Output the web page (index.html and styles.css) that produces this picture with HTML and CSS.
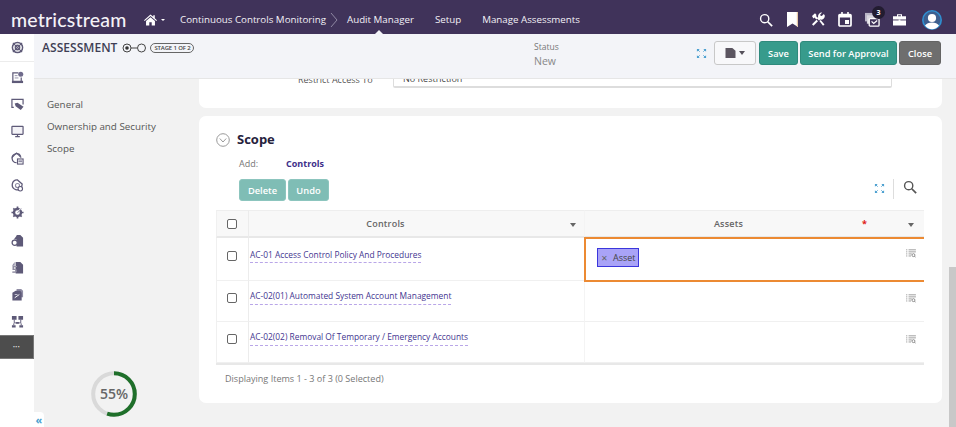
FILE: index.html
```html
<!DOCTYPE html>
<html lang="en">
<head>
<meta charset="utf-8">
<title>Assessment</title>
<link rel="stylesheet" href="styles.css">
</head>
<body>
<svg class="defs" width="0" height="0" aria-hidden="true">
  <symbol id="i-expand" viewBox="0 0 12 12"><path d="M1 1h3L1 4zM11 1H8l3 3zM1 11h3l-3-3zM11 11H8l3-3z" fill="#4a9fd0"/><path d="M2 2l2 2M10 2L8 4M2 10l2-2M10 10L8 8" stroke="#4a9fd0" stroke-width="1"/></symbol>
  <symbol id="i-search" viewBox="0 0 16 16"><circle cx="6.500" cy="6.500" r="4.700" fill="none" stroke="currentColor" stroke-width="1.600"/><path d="M10 10l5 5" stroke="currentColor" stroke-width="2"/></symbol>
  <symbol id="i-list" viewBox="0 0 12 11"><path d="M0 1h1.500M3 1h9M0 3.500h1.500M3 3.500h9M0 6h1.500M3 6h4M0 8.500h1.500M3 8.500h3" stroke="#8a8a8a" stroke-width="1" fill="none"/><circle cx="9" cy="7.500" r="1.800" fill="none" stroke="#777" stroke-width="1"/><path d="M10.300 8.800l1.500 1.500" stroke="#777" stroke-width="1"/></symbol>
  <symbol id="i-doc" viewBox="0 0 14 14"><path d="M2 12V2h6M11 7v5" fill="none" stroke="#5e5a78" stroke-width="1.300"/><path d="M1 10.500h12V13H1z" fill="#5e5a78"/><path d="M4 5h3M4 7.500h4" stroke="#8f8ca4"/><circle cx="10.500" cy="3.500" r="2.700" fill="#6f6b8c"/></symbol>
  <symbol id="i-screen" viewBox="0 0 14 14"><rect x="1" y="1.500" width="12" height="8.500" rx=".5" fill="#f4f3f7" stroke="#5e5a78" stroke-width="1.300"/><path d="M4.500 12.500h5M7 10v2" stroke="#5e5a78" stroke-width="1.300"/></symbol>
  <symbol id="i-screen2" viewBox="0 0 14 14"><path d="M3 10H1V1.500h12V7" fill="none" stroke="#5e5a78" stroke-width="1.300"/><path d="M4 6l3-1 6.500 4.500L10.500 13 5 9z" fill="#5e5a78"/></symbol>
  <symbol id="i-home" viewBox="0 0 14 14"><path d="M6 11.500A4.800 4.800 0 1 1 10.500 5" fill="none" stroke="#5e5a78" stroke-width="1.400"/><path d="M1 6l5-5 5 5" fill="none" stroke="#5e5a78" stroke-width="1.200"/><rect x="7" y="7.500" width="6" height="5.500" fill="#fff" stroke="#5e5a78" stroke-width="1.200"/><path d="M8 9h4v2H8z" fill="#8f8ca4"/></symbol>
  <symbol id="i-target" viewBox="0 0 14 14"><path d="M7 1l5 4.500-.5 3A5.300 5.300 0 1 1 7 1z" fill="none" stroke="#5e5a78" stroke-width="1.400"/><circle cx="7" cy="7" r="2.200" fill="none" stroke="#8f8ca4" stroke-width="1.200"/><circle cx="10" cy="10.500" r="2.400" fill="#fff" stroke="#5e5a78" stroke-width="1.200"/></symbol>
  <symbol id="i-gear" viewBox="0 0 14 14"><circle cx="7" cy="7" r="3.800" fill="none" stroke="#5e5a78" stroke-width="2.600"/><path d="M7 .5v2M7 11.500v2M.5 7h2M11.500 7h2M2.500 2.500l1.400 1.400M10 10l1.500 1.500M2.500 11.500L4 10" stroke="#5e5a78" stroke-width="1.800"/><path d="M6 8l5-6" stroke="#fff" stroke-width="1.400"/><path d="M7 7.500l4-5" stroke="#8f8ca4" stroke-width="1"/></symbol>
  <symbol id="i-file" viewBox="0 0 14 14"><path d="M6 1h4l3 3v9.500H6zM3 6l3-4v4z" fill="#5e5a78"/><circle cx="4" cy="9.500" r="2.800" fill="#fff" stroke="#5e5a78" stroke-width="1.400"/></symbol>
  <symbol id="i-file2" viewBox="0 0 14 14"><path d="M5 1h5l3 3v9.500H5z" fill="#5e5a78"/><path d="M1 5l3-4v4z" fill="#8f8ca4"/><path d="M6.500 6H2.500v3h3v3H1.500" fill="none" stroke="#5e5a78" stroke-width="1.500"/><path d="M6.500 6H2.500v3h3v3H1.500" fill="none" stroke="#fff" stroke-width=".4"/></symbol>
  <symbol id="i-stack" viewBox="0 0 14 14"><path d="M6 1h5l2 2v7H6z" fill="#8f8ca4"/><path d="M1.500 5L5 3h5l1.500 2v8.500h-10z" fill="#5e5a78"/><path d="M4 10.500l5-3.500" stroke="#fff" stroke-width="1"/><path d="M4 7h3" stroke="#c8c6d4"/></symbol>
  <symbol id="i-org" viewBox="0 0 14 14"><path d="M1 1h5v4H1zM8 1h5v4H8zM5.500 7.500h3v2h-3zM1 11h4v2.500H1zM9 11h4v2.500H9z" fill="#5e5a78"/><path d="M3.500 5v3.500H7M10.500 5v3.500H7M3 11V9M11 11V9" stroke="#5e5a78" fill="none"/></symbol>
</svg>

<header class="topbar">
  <span class="logo">metricstream</span>
  <span class="home">
    <svg class="home-icon" viewBox="0 0 14 12"><path d="M7 0l3 2.600V1h1.600v3L14 6.200l-.8.800L7 1.800.8 7 0 6.200z" fill="#fff"/><path d="M2.200 7L7 3l4.800 4v5H8.300V8.500H5.700V12H2.200z" fill="#fff"/></svg>
    <i class="caret caret-white"></i>
  </span>
  <nav class="mainnav">
    <span class="crumb">Continuous Controls Monitoring</span>
    <svg class="chev" viewBox="0 0 8 16"><path d="M1 1l6 7-6 7" fill="none" stroke="#8f88a3" stroke-width="1"/></svg>
    <span class="crumb crumb-active">Audit Manager</span>
    <span class="crumb crumb-setup">Setup</span>
    <span class="crumb crumb-manage">Manage Assessments</span>
  </nav>
  <div class="tools">
    <svg class="tool tool-search"><use href="#i-search"/></svg>
    <svg class="tool tool-mark" viewBox="0 0 11 15"><path d="M0 0h11v15L5.500 11.500 0 15z" fill="#fff"/><path d="M9.800 0H11v15l-1.200-.8z" fill="#e8c9a8"/></svg>
    <svg class="tool" viewBox="0 0 14 14"><path d="M1 3.500L4 .8l1.600 1.600L5 3.400l2 2-1.600 1.700-2-2-1 .8z" fill="#fff"/><path d="M5.500 7.300L1 11.800 2.400 13.300 7 8.700z" fill="#fff"/><path d="M12.800 1.500l-2 2-1.300-.3-.3-1.300 2-1.800a3.700 3.700 0 0 0-4 4.700L6 6 8 8l1.200-1a3.700 3.700 0 0 0 4.600-4z" fill="#fff"/><path d="M8.400 8.600l3.600 4.600 1.500-1.300L9.700 7.400z" fill="#fff"/></svg>
    <svg class="tool" viewBox="0 0 14 15"><rect x="1" y="2.500" width="12" height="11.500" rx="1" fill="none" stroke="#fff" stroke-width="1.700"/><path d="M1 3h12v2.500H1zM3.200 0h1.600v3H3.200zM9.200 0h1.600v3H9.200z" fill="#fff"/><rect x="7" y="8" width="4" height="4" fill="#fff"/></svg>
    <span class="tool-badged">
      <svg class="tool tool-tasks" viewBox="0 0 16 16"><path d="M0 1h9v9H0z" fill="#b9b5c6"/><path d="M2 3.500h10v9H2z" fill="#d9d7df"/><rect x="4.500" y="7" width="10.500" height="8" rx="1" fill="#40335a" stroke="#fff" stroke-width="1.400"/><path d="M7 10l2.300 2.300L13 9" stroke="#fff" stroke-width="1.300" fill="none"/></svg>
      <b class="badge">3</b>
    </span>
    <svg class="tool tool-case" viewBox="0 0 14 13"><path d="M0 3h14v10H0zM4.300 3V.8h5.400V3H8.500V2H5.500v1z" fill="#fff"/><path d="M0 7h14" stroke="#40335a" stroke-width="1"/><path d="M6 6.500h2v1.500H6z" fill="#fff"/></svg>
    <svg class="avatar" viewBox="0 0 20 20"><circle cx="10" cy="10" r="10" fill="#2f8fd0"/><circle cx="10" cy="10" r="8.400" fill="#3d5f8f"/><circle cx="10" cy="8" r="4.100" fill="#fff"/><path d="M3 15.500a8 6 0 0 1 14 0A8.400 8.400 0 0 1 3 15.500z" fill="#fff"/></svg>
  </div>
</header>

<div class="body">
  <aside class="rail">
    <div class="rail-top"><svg class="rail-icon" viewBox="0 0 14 14"><circle cx="7" cy="7" r="5.500" fill="none" stroke="#5e5a78" stroke-width="1.600"/><circle cx="7" cy="7" r="2.400" fill="none" stroke="#5e5a78" stroke-width="1.400"/><path d="M2 2l10 10M12 2L2 12" stroke="#5e5a78" stroke-width="1.200"/></svg></div>
    <div class="rail-list">
      <svg class="rail-icon"><use href="#i-doc"/></svg>
      <svg class="rail-icon"><use href="#i-screen2"/></svg>
      <svg class="rail-icon"><use href="#i-screen"/></svg>
      <svg class="rail-icon"><use href="#i-home"/></svg>
      <svg class="rail-icon"><use href="#i-target"/></svg>
      <svg class="rail-icon"><use href="#i-gear"/></svg>
      <svg class="rail-icon"><use href="#i-file"/></svg>
      <svg class="rail-icon"><use href="#i-file2"/></svg>
      <svg class="rail-icon"><use href="#i-stack"/></svg>
      <svg class="rail-icon"><use href="#i-org"/></svg>
    </div>
    <div class="rail-more">•••</div>
  </aside>

  <div class="content">
    <div class="subheader">
      <div class="title-block">
        <span class="title">ASSESSMENT</span>
        <svg class="stages" viewBox="0 0 25 10"><circle cx="5" cy="5" r="4" fill="none" stroke="#444" stroke-width="1"/><circle cx="5" cy="5" r="1.800" fill="#333"/><path d="M9 5h6" stroke="#444"/><circle cx="19.500" cy="5" r="4" fill="none" stroke="#444" stroke-width="1"/></svg>
        <span class="stage-pill">STAGE 1 OF 2</span>
      </div>
      <div class="status"><span class="status-label">Status</span><span class="status-value">New</span></div>
      <div class="actions">
        <svg class="expand"><use href="#i-expand"/></svg>
        <button class="btn-file"><svg class="file-glyph" viewBox="0 0 11 11"><path d="M0 0h7.500L11 3v8H0z" fill="#5b5560"/></svg><i class="caret caret-dark"></i></button>
        <button class="btn btn-teal">Save</button>
        <button class="btn btn-teal btn-send">Send for Approval</button>
        <button class="btn btn-gray">Close</button>
      </div>
    </div>

    <div class="workspace">
      <div class="sidenav">
        <a class="navlink">General</a>
        <a class="navlink">Ownership and Security</a>
        <a class="navlink">Scope</a>
        <svg class="ring" viewBox="0 0 46 46">
          <circle cx="23" cy="23" r="20.800" fill="none" stroke="#d9d9d9" stroke-width="4"/>
          <circle cx="23" cy="23" r="20.800" fill="none" stroke="#1f6f2a" stroke-width="4" stroke-dasharray="71.900 58.800" transform="rotate(-90 23 23)"/>
          <text x="23" y="28" text-anchor="middle" class="ring-text">55%</text>
        </svg>
        <span class="collapse">«</span>
      </div>

      <main class="main">
        <section class="card card-clip">
          <div class="clip-row">
            <span class="clip-label">Restrict Access To</span>
            <span class="clip-input">No Restriction</span>
          </div>
        </section>

        <section class="card card-scope">
          <h2 class="scope-head">
            <svg class="scope-toggle" viewBox="0 0 14 14"><circle cx="7" cy="7" r="6.300" fill="none" stroke="#9a9a9a"/><path d="M3.800 5.500L7 9l3.200-3.500" fill="none" stroke="#9a9a9a"/></svg>
            Scope
          </h2>
          <div class="add-row"><span class="add-label">Add:</span><a class="add-link">Controls</a></div>
          <div class="toolbar">
            <button class="btn btn-soft">Delete</button>
            <button class="btn btn-soft">Undo</button>
            <span class="toolbar-right">
              <svg class="expand"><use href="#i-expand"/></svg>
              <span class="divider"></span>
              <svg class="tb-search"><use href="#i-search"/></svg>
            </span>
          </div>

          <div class="grid">
            <div class="gcell head c-check"><i class="check"></i></div>
            <div class="gcell head c-controls"><span class="head-text">Controls</span><i class="caret caret-gray"></i></div>
            <div class="gcell head c-assets"><span class="head-text">Assets</span><span class="req">*</span><i class="caret caret-gray"></i></div>

            <div class="gcell r1 c-check"><i class="check"></i></div>
            <div class="gcell r1 c-controls"><a class="rowlink">AC-01 Access Control Policy And Procedures</a></div>
            <div class="gcell r1 c-assets editing">
              <span class="chip"><span class="chip-x">✕</span>Asset</span>
              <svg class="list-icon"><use href="#i-list"/></svg>
            </div>

            <div class="gcell r2 c-check"><i class="check"></i></div>
            <div class="gcell r2 c-controls"><a class="rowlink">AC-02(01) Automated System Account Management</a></div>
            <div class="gcell r2 c-assets"><svg class="list-icon"><use href="#i-list"/></svg></div>

            <div class="gcell r3 c-check"><i class="check"></i></div>
            <div class="gcell r3 c-controls"><a class="rowlink">AC-02(02) Removal Of Temporary / Emergency Accounts</a></div>
            <div class="gcell r3 c-assets"><svg class="list-icon"><use href="#i-list"/></svg></div>
          </div>
          <p class="footer-note">Displaying Items 1 - 3 of 3 (0 Selected)</p>
        </section>
      </main>

      <div class="scrollbar"><span class="thumb"></span></div>
    </div>
  </div>
</div>
</body>
</html>
```
FILE: styles.css
```css
* { box-sizing: border-box; }
html, body { margin: 0; height: 100%; overflow: hidden; }
body { width: 956px; height: 427px; display: flex; flex-direction: column; font-family: "Open Sans", "Noto Sans", sans-serif; background: #f2f2f2; color: #333; }
.defs { position: absolute; }
button { font-family: inherit; }

.topbar { height: 34px; flex: none; display: flex; align-items: center; background: #40335a; color: #fff; padding: 5px 0 0 11px; position: relative; }
.logo { font-family: "Lato", sans-serif; font-size: 19.500px; font-weight: 500; letter-spacing: .2px; width: 133px; color: #f4f2f7; }
.home { display: flex; align-items: center; gap: 4px; width: 36px; }
.home-icon { width: 13px; height: 12px; }
.caret { display: inline-block; width: 0; height: 0; border-left: 3.500px solid transparent; border-right: 3.500px solid transparent; border-top: 4px solid #fff; }
.caret-white { border-left-width: 2.500px; border-right-width: 2.500px; border-top-width: 2.500px; }
.mainnav { display: flex; align-items: center; font-size: 9.750px; font-weight: 400; }
.crumb { color: #f2f0f6; white-space: nowrap; }
.chev { width: 8px; height: 16px; margin: 0 9px 0 4px; }
.crumb-active { position: relative; }
.crumb-active::after { content: ""; position: absolute; left: 28px; bottom: -8px; border-left: 4px solid transparent; border-right: 4px solid transparent; border-bottom: 4px solid #f3f4f8; }
.crumb-setup { margin-left: 21px; }
.crumb-manage { margin-left: 21px; }
.tools { margin-left: auto; display: flex; align-items: center; padding-right: 14px; gap: 13px; }
.tool { width: 14px; height: 15px; display: block; color: #fff; }
.tool-search { width: 14px; height: 14px; }
.tool-mark { width: 11px; margin-left: 1px; }
.tool-tasks { width: 15px; }
.tool-case { width: 13px; height: 13px; }
.tool-badged { position: relative; display: block; }
.badge { position: absolute; top: -6px; right: -5px; width: 13px; height: 13px; border-radius: 50%; background: #221c30; font-size: 7px; line-height: 13px; text-align: center; color: #fff; }
.avatar { width: 20px; height: 20px; margin-left: 3px; }

.body { flex: 1; min-height: 0; display: flex; }
.rail { width: 34px; flex: none; background: #fff; position: relative; display: flex; flex-direction: column; }
.rail-top { height: 28px; display: flex; align-items: center; justify-content: center; border-bottom: 1px solid #ececec; }
.rail-icon { width: 13px; height: 13px; display: block; }
.rail-list { display: flex; flex-direction: column; align-items: center; gap: 14.100px; padding-top: 9px; }
.rail-more { height: 24px; margin-top: 7px; background: #4d4d4d; border: 1px solid #777; border-left: 0; color: #eee; font-size: 5px; letter-spacing: .5px; display: flex; align-items: center; justify-content: center; }

.content { flex: 1; min-width: 0; display: flex; flex-direction: column; }
.subheader { height: 45px; flex: none; background: #f3f4f8; border-bottom: 1px solid #e6e6e6; display: flex; align-items: flex-start; position: relative; }
.title-block { display: flex; align-items: center; padding: 5px 0 0 8px; width: 500px; }
.title { font-size: 12px; font-weight: 600; color: #3e3e55; letter-spacing: .05px; }
.stages { width: 25px; height: 10px; margin: 1px 0 0 5px; }
.stage-pill { margin-left: 3px; border: 1px solid #666; border-radius: 7px; font-size: 6px; line-height: 8px; height: 10px; width: 44px; text-align: center; color: #444; font-weight: 600; white-space: nowrap; letter-spacing: -.15px; }
.status { display: flex; flex-direction: column; padding-top: 7px; }
.status-label { font-size: 8.500px; line-height: 12px; color: #777; }
.status-value { font-size: 10.500px; line-height: 16px; color: #888; }
.actions { position: absolute; right: 14px; top: 7px; display: flex; align-items: center; }
.expand { width: 11px; height: 11px; display: block; margin-right: 6px; }
.btn-file { width: 42px; height: 24px; border: 1px solid #c8c8c8; background: #f8f8fa; border-radius: 3px; margin-right: 3px; display: flex; align-items: center; justify-content: center; gap: 3px; padding: 0; margin-left: 1px; }
.file-glyph { width: 11px; height: 10px; }
.caret-dark { border-top-color: #55505a; }
.btn { border: 1px solid #8fa; border-radius: 3px; font-size: 9.300px; font-weight: 600; height: 24px; padding: 0; color: #fff; }
.btn-teal { background: #379b8c; border-color: #2f8a7c; width: 39px; margin-right: 2px; }
.btn-send { width: 97px; }
.btn-gray { background: #6e6e6e; border-color: #646464; width: 42px; margin-left: 0; margin-right: 1px; }

.workspace { flex: 1; min-height: 0; display: flex; }
.sidenav { width: 165px; flex: none; position: relative; display: flex; flex-direction: column; padding: 19px 0 0 13px; }
.navlink { font-size: 9.800px; line-height: 14px; margin-bottom: 8px; color: #555; }
.ring { position: absolute; left: 57px; top: 292px; width: 46px; height: 46px; }
.ring-text { font-size: 14px; font-weight: 600; fill: #666; font-family: "Open Sans", sans-serif; }
.collapse { position: absolute; left: 0; bottom: 0; width: 10px; height: 15px; background: #fff; border-top-right-radius: 4px; color: #4a9fd0; font-size: 11px; line-height: 15px; text-align: center; font-weight: 700; }

.main { flex: 1; min-width: 0; overflow: hidden; display: flex; flex-direction: column; gap: 8px; }
.card { background: #fff; border-radius: 7px; flex: none; }
.card-clip { height: 29px; border-radius: 0 0 7px 7px; position: relative; overflow: hidden; }
.clip-row { display: flex; align-items: flex-start; height: 9px; padding-left: 99px; }
.clip-label { font-size: 9px; line-height: 1px; height: 9px; color: #555; width: 95px; white-space: nowrap; }
.clip-input { width: 499px; height: 9px; border: 1px solid #ddd; border-top: 0; border-bottom-width: 2px; border-radius: 0 0 2px 2px; font-size: 9px; line-height: 0; padding-left: 9px; color: #444; background: #fff; }
.card-scope { height: 287px; padding: 0 18px 0 17px; }
.scope-head { margin: 0; height: 46px; padding-top: 15px; display: flex; align-items: flex-start; font-size: 13px; line-height: 17px; font-weight: 700; color: #26223c; gap: 7px; }
.scope-toggle { width: 14px; height: 14px; margin-top: 2px; }
.add-row { display: flex; font-size: 9px; line-height: 12px; height: 17px; padding-left: 23px; margin-top: -4px; }
.add-label { width: 47px; color: #777; }
.add-link { color: #40308a; font-weight: 700; }
.toolbar { display: flex; align-items: flex-start; gap: 2px; padding-left: 23px; height: 31px; margin-top: 4px; }
.btn-soft { width: 47px; height: 22px; background: #7fbdb5; border-color: #8cc5be; margin: 0; }
.btn-soft + .btn-soft { width: 41px; }
.toolbar-right { margin-left: auto; display: flex; align-items: flex-start; height: 20px; padding-right: 7px; }
.toolbar-right .expand { margin: 4px 8px 0 0; }
.divider { width: 1px; height: 20px; background: #ddd; margin-right: 9px; }
.tb-search { width: 14px; height: 14px; color: #555; display: block; margin-top: 1px; }

.grid { display: grid; grid-template-columns: 33px 335px 340px; grid-template-rows: 28px 43px 41px 41px; border-bottom: 2px solid #e8e8e8; }
.gcell { display: flex; position: relative; border-bottom: 1px solid #f0f0f0; }
.head { background: #f8f8f8; border-top: 1px solid #eee; border-bottom: 2px solid #e8e8e8; align-items: center; justify-content: center; }
.c-check { border-right: 1px solid #ececec; border-left: 1px solid #f0f0f0; align-items: center; justify-content: center; padding-right: 1px; }
.c-assets { border-left: 1px solid #f4f4f4; }
.r1.c-check, .r2.c-check, .r3.c-check { padding-bottom: 7px; }
.check { width: 10px; height: 10px; border: 1px solid #666; border-radius: 2px; background: #fff; display: block; }
.head-text { font-size: 9px; font-weight: 600; color: #666; letter-spacing: .2px; }
.c-controls .head-text { margin-right: 62px; }
.caret-gray { position: absolute; right: 8px; top: 12px; border-top-color: #666; }
.c-assets .head-text { margin-right: 52px; }
.c-assets .caret-gray { right: 10px; }
.req { position: absolute; left: 277px; top: 7px; color: #e01818; font-size: 9px; line-height: 12px; font-weight: 700; }
.c-controls:not(.head) { padding: 8px 0 0 1px; align-items: flex-start; }
.r1.c-controls:not(.head) { padding-top: 10px; }
.rowlink { font-size: 8.400px; line-height: 13px; color: #3f3590; border-bottom: 1px dashed #b9a6e8; padding-bottom: 2px; white-space: nowrap; }
.r1 .rowlink { padding-bottom: 1px; }
.gcell.editing { border: 2px solid #ec8a33; border-right: 0; padding: 9px 0 0 11px; align-items: flex-start; margin: -1px 0 -1px; z-index: 1; background: #fff; }
.chip { display: inline-flex; align-items: center; height: 19px; padding: 0 2px 0 3px; background: #a9a3f7; border: 1px solid #3b36dc; color: #444; font-size: 9px; }
.chip-x { font-size: 8px; color: #666; margin-right: 6px; width: 6px; }
.list-icon { position: absolute; right: 8px; top: 13px; width: 10px; height: 9px; }
.editing .list-icon { right: 8px; top: 10px; }
.footer-note { margin: 8px 0 0 9px; font-size: 9.050px; line-height: 12px; color: #777; }

.scrollbar { width: 14px; flex: none; padding-left: 7px; padding-top: 188px; }
.thumb { display: block; width: 7px; height: 160px; background: #c8c8c8; }
```
